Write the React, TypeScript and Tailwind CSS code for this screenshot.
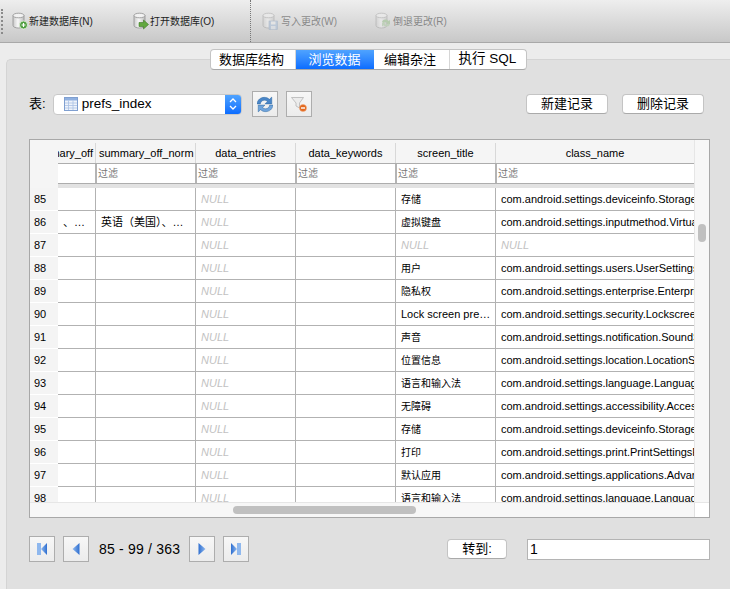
import React from "react"

const rows = [
    { n: 85, title: "存储", cls: "com.android.settings.deviceinfo.StorageSettings" },
    { n: 86, a: "、…", b: "英语（美国）、…", title: "虚拟键盘", cls: "com.android.settings.inputmethod.VirtualKeyboardFragment" },
    { n: 87, title: null, cls: null },
    { n: 88, title: "用户", cls: "com.android.settings.users.UserSettings" },
    { n: 89, title: "隐私权", cls: "com.android.settings.enterprise.EnterprisePrivacySettings" },
    { n: 90, title: "Lock screen pre…", latin: true, cls: "com.android.settings.security.LockscreenDashboardFragment" },
    { n: 91, title: "声音", cls: "com.android.settings.notification.SoundSettings" },
    { n: 92, title: "位置信息", cls: "com.android.settings.location.LocationSettings" },
    { n: 93, title: "语言和输入法", cls: "com.android.settings.language.LanguageAndInputSettings" },
    { n: 94, title: "无障碍", cls: "com.android.settings.accessibility.AccessibilitySettings" },
    { n: 95, title: "存储", cls: "com.android.settings.deviceinfo.StorageSettings" },
    { n: 96, title: "打印", cls: "com.android.settings.print.PrintSettingsFragment" },
    { n: 97, title: "默认应用", cls: "com.android.settings.applications.AdvancedAppSettings" },
    { n: 98, title: "语言和输入法", cls: "com.android.settings.language.LanguageAndInputSettings" }
]

const Db = ({ children }: { children?: React.ReactNode }) => (
    <svg width="16" height="18" viewBox="0 0 16 18" className="shrink-0">
        <defs>
            <linearGradient id="dbg" x1="0" x2="1" y1="0" y2="0">
                <stop offset="0" stopColor="#c9c9c9" />
                <stop offset="0.45" stopColor="#f8f8f8" />
                <stop offset="1" stopColor="#bdbdbd" />
            </linearGradient>
        </defs>
        <path d="M1 3.5v10c0 1.5 2.6 2.5 5.5 2.5s5.5-1 5.5-2.5v-10z" fill="url(#dbg)" stroke="#8f8f8f" strokeWidth="0.8" />
        <ellipse cx="6.5" cy="3.5" rx="5.5" ry="2.3" fill="#f2f2f2" stroke="#8f8f8f" strokeWidth="0.8" />
        {children}
    </svg>
)

const DbNew = () => (
    <Db>
        <circle cx="11.5" cy="13" r="4" fill="#4f9e3f" stroke="#e8f5e0" strokeWidth="0.8" />
        <path d="M11.5 11v4M9.5 13h4" stroke="#fff" strokeWidth="1.2" />
    </Db>
)

const DbOpen = () => (
    <Db>
        <path d="M6 10.5h4.5V8l5 4.5-5 4.5v-2.5H6z" fill="#62a83f" stroke="#3d7a25" strokeWidth="0.6" />
    </Db>
)

const DbSave = () => (
    <Db>
        <rect x="7" y="9" width="8.5" height="8.5" fill="#9db7d8" stroke="#7f98b8" strokeWidth="0.6" />
        <rect x="9" y="9.5" width="4.5" height="3" fill="#f2f2f2" />
        <rect x="9" y="14" width="4.5" height="3.2" fill="#dfe6ef" />
    </Db>
)

const DbRevert = () => (
    <Db>
        <path d="M7 9.5a4 4 0 0 1 6.5-.5l1.5-1v4h-4l1.3-1a2.4 2.4 0 0 0-3.8.3z" fill="#8cba7c" />
        <path d="M15 12.5a4 4 0 0 1-6.5.7L7 14.5v-4h4l-1.3 1.2a2.4 2.4 0 0 0 3.8-.2z" fill="#a5c99a" />
    </Db>
)

const TableIcon = () => (
    <svg width="14" height="14" viewBox="0 0 14 14" className="shrink-0">
        <rect x="0.5" y="0.5" width="13" height="13" fill="#eef3fb" stroke="#7f9fd0" />
        <rect x="1" y="1" width="12" height="2.5" fill="#8fb0e0" />
        <path d="M1 6h12M1 8.5h12M1 11h12M4.5 3.5V13M9 3.5V13" stroke="#a9c0e4" strokeWidth="0.8" />
    </svg>
)

const RefreshIcon = () => (
    <svg width="16" height="17" viewBox="1.5 2.5 13 13">
        <path d="M1.5 8.5C2 5 4.5 3.2 7.5 3.2c1.7 0 3 .6 4.1 1.6L13.5 3v5.5H8l2-2C9.3 5.8 8.5 5.500 7.500 5.500c-1.700 0-3 1.200-3.300 3z" fill="#4a86c8" stroke="#2d659f" strokeWidth="0.4" />
        <path d="M14.500 9.500c-.5 3.500-3 5.300-6 5.300-1.700 0-3-.6-4.100-1.600L2.500 15V9.500H8l-2 2c.7.700 1.500 1 2.500 1 1.700 0 3-1.200 3.300-3z" fill="#6fa4dc" stroke="#2d659f" strokeWidth="0.4" />
    </svg>
)

const FilterClearIcon = () => (
    <svg width="16" height="16" viewBox="0 0 16 16">
        <path d="M0.500 1.500h12L8.500 7v5L5 10V7z" fill="#ececec" stroke="#b5b5b5" strokeWidth="0.8" />
        <circle cx="12" cy="12" r="3.500" fill="#e2681f" stroke="#f3a878" strokeWidth="0.5" />
        <rect x="10" y="11.300" width="4" height="1.400" fill="#fff" />
    </svg>
)

const NavIcon = ({ dir, bar }: { dir: "l" | "r"; bar?: boolean }) => (
    <svg width="14" height="14" viewBox="0 0 14 14">
        <defs>
            <linearGradient id="navg" x1="0" x2="1" y1="0" y2="0">
                <stop offset="0" stopColor="#8fb8ee" />
                <stop offset="1" stopColor="#2f6fd0" />
            </linearGradient>
        </defs>
        <g transform={dir === "r" ? "translate(14 0) scale(-1 1)" : undefined}>
            {bar ? (
                <>
                    <rect x="2" y="1" width="4" height="12" fill="#8fb8ee" />
                    <path d="M12 1v12L6 7z" fill="url(#navg)" />
                </>
            ) : (
                <path d="M10.500 1v12L3.500 7z" fill="url(#navg)" />
            )}
        </g>
    </svg>
)

const ToolItem = ({ w, icon, label, off }: { w: string; icon: React.ReactNode; label: string; off?: boolean }) => (
    <div className={`flex items-center ${w} ${off ? "opacity-45" : ""}`}>
        {icon}
        <span className="text-[10px] text-[#222]">{label}</span>
    </div>
)

const IconButton = ({ children }: { children: React.ReactNode }) => (
    <div className="flex h-[26px] w-[26px] shrink-0 items-center justify-center border border-[#adadad] bg-gradient-to-b from-[#f7f7f7] to-[#ececec]">
        {children}
    </div>
)

const MacButton = ({ w, children }: { w: string; children: React.ReactNode }) => (
    <div className={`flex h-[20px] ${w} shrink-0 items-center justify-center rounded-[4px] border border-[#c4c4c4] border-b-[#aaa] bg-white text-[13px] text-black`}>
        {children}
    </div>
)

const Tab = ({ label, active, w }: { label: string; active?: boolean; w: string }) => (
    <div
        className={`flex h-full ${w} items-center justify-center text-[13px] ${
            active ? "bg-gradient-to-b from-[#4fa3ff] to-[#0a6cff] text-white" : "border-r border-[#d6d6d6] text-black"
        }`}
    >
        {label}
    </div>
)

const Null = () => <span className="text-[11px] italic text-[#c2c2c2]">NULL</span>

const Head = ({ w, children }: { w: string; children: React.ReactNode }) => (
    <div className={`flex ${w} shrink-0 items-center justify-center overflow-hidden whitespace-nowrap border-r border-[#d8d8d8] text-[11px] text-black`}>
        {children}
    </div>
)

const Filter = ({ w }: { w: string }) => (
    <div className={`flex ${w} shrink-0 items-center border-l-2 border-[#b4b4b4] pl-[1px] text-[10px] text-[#777]`}>过滤</div>
)

const Cell = ({ w, children }: { w: string; children?: React.ReactNode }) => (
    <div className={`flex ${w} shrink-0 items-center overflow-hidden whitespace-nowrap border-r border-b border-[#b2b2b2] pl-[5px] text-[11px] text-black`}>
        {children}
    </div>
)

const App = () => (
    <div className="flex h-[589px] w-[730px] flex-col overflow-hidden bg-[#ececec] font-['Liberation_Sans','Noto_Sans_CJK_SC',sans-serif]">
        <div className="flex h-[43px] shrink-0 items-center border-b border-[#a9a9a9] bg-gradient-to-b from-[#eeeeee] to-[#c8c8c8]">
            <div className="ml-[1px] mr-[9px] h-[25px] w-[2px] border-l-2 border-dotted border-[#8a8a8a]" />
            <ToolItem w="w-[121px] gap-[1px]" icon={<DbNew />} label="新建数据库(N)" />
            <ToolItem w="w-[117px] gap-[1px]" icon={<DbOpen />} label="打开数据库(O)" />
            <div className="mr-[11px] h-full w-[1px] border-l border-dotted border-[#777]" />
            <ToolItem w="w-[113px] gap-[3px]" icon={<DbSave />} label="写入更改(W)" off />
            <ToolItem w="w-[100px] gap-[2px]" icon={<DbRevert />} label="倒退更改(R)" off />
        </div>

        <div className="flex min-h-0 flex-1 flex-col pl-[6px] pt-[6px]">
            <div className="z-10 -mb-[11px] flex h-[21px] shrink-0 justify-center">
                <div className="flex w-[317px] overflow-hidden rounded-[4px] border border-[#c4c4c4] border-b-[#a8a8a8] bg-white">
                    <Tab w="w-[85px] pr-[2px]" label="数据库结构" />
                    <Tab w="w-[78px]" label="浏览数据" active />
                    <Tab w="w-[76px] pr-[2px]" label="编辑杂注" />
                    <div className="flex h-full flex-1 items-center justify-center text-[13.5px] text-black">执行 SQL</div>
                </div>
            </div>

            <div className="flex min-h-0 flex-1 flex-col rounded-tl-[5px] border-l border-t border-[#d4d4d4] bg-[#e0e0e0] pl-[22px] pr-[20px]">
                <div className="mt-[31px] flex h-[26px] items-center">
                    <span className="mr-[7px] text-[13px] text-black">表:</span>
                    <div className="flex h-[21px] w-[189px] shrink-0 items-center overflow-hidden rounded-[4px] border border-[#c8c8c8] bg-white">
                        <div className="ml-[10px] mr-[4px]">
                            <TableIcon />
                        </div>
                        <span className="flex-1 text-[13.5px] text-black">prefs_index</span>
                        <div className="flex h-full w-[16px] items-center justify-center bg-gradient-to-b from-[#4fa3ff] to-[#0a6cff]">
                            <svg width="8" height="14" viewBox="0 0 8 14" fill="none" stroke="#fff" strokeWidth="1.300">
                                <path d="M1 5l3-3 3 3M1 9l3 3 3-3" />
                            </svg>
                        </div>
                    </div>
                    <div className="ml-[10px] mr-[8px]">
                        <IconButton>
                            <RefreshIcon />
                        </IconButton>
                    </div>
                    <IconButton>
                        <FilterClearIcon />
                    </IconButton>
                    <div className="flex-1" />
                    <MacButton w="w-[82px]">新建记录</MacButton>
                    <div className="ml-[14px] mr-[6px]">
                        <MacButton w="w-[82px]">删除记录</MacButton>
                    </div>
                </div>

                <div className="mt-[22px] flex h-[379px] shrink-0 flex-col border border-[#a8a8a8] bg-[#f6f6f6]">
                    <div className="flex min-h-0 flex-1">
                        <div className="flex min-w-0 flex-1 flex-col">
                            <div className="flex h-[23px] shrink-0 bg-[#f5f5f5] pt-[3px]">
                                <div className="w-[28px] shrink-0" />
                                <div className="flex w-[38px] shrink-0 items-center justify-end overflow-hidden whitespace-nowrap border-r border-[#d8d8d8] pr-[2px] text-[11px] text-black">
                                    <span className="shrink-0">summary_off</span>
                                </div>
                                <Head w="w-[100px]">
                                    <span className="w-full pl-[3px]">summary_off_norm</span>
                                </Head>
                                <Head w="w-[100px]">data_entries</Head>
                                <Head w="w-[100px]">data_keywords</Head>
                                <Head w="w-[100px]">screen_title</Head>
                                <Head w="w-[199px]">class_name</Head>
                            </div>
                            <div className="flex h-[21px] shrink-0 bg-[#f5f5f5]">
                                <div className="w-[28px] shrink-0" />
                                <div className="flex flex-1 border-y border-[#adadad] bg-white">
                                    <div className="w-[37px] shrink-0" />
                                    <Filter w="w-[100px]" />
                                    <Filter w="w-[100px]" />
                                    <Filter w="w-[100px]" />
                                    <Filter w="w-[100px]" />
                                    <Filter w="flex-1" />
                                </div>
                            </div>
                            <div className="flex h-[4px] shrink-0 bg-[#e2e2e2]">
                                <div className="w-[28px] shrink-0 bg-[#f5f5f5]" />
                            </div>
                            <div className="min-h-0 flex-1 overflow-hidden bg-white">
                                {rows.map((row) => (
                                    <div key={row.n} className="flex h-[23px]">
                                        <div className="flex w-[28px] shrink-0 items-center border-b border-white bg-[#f4f4f4] pl-[4px] text-[11px] text-black">
                                            {row.n}
                                        </div>
                                        <Cell w="w-[38px]">{row.a}</Cell>
                                        <Cell w="w-[100px]">{row.b}</Cell>
                                        <Cell w="w-[100px]">
                                            <Null />
                                        </Cell>
                                        <Cell w="w-[100px]" />
                                        <Cell w="w-[100px]">
                                            {row.title === null ? (
                                                <Null />
                                            ) : (
                                                <span className={row.latin ? "" : "text-[10px]"}>{row.title}</span>
                                            )}
                                        </Cell>
                                        <Cell w="w-[199px]">{row.cls ?? <Null />}</Cell>
                                    </div>
                                ))}
                            </div>
                        </div>
                        <div className="w-[15px] shrink-0 border-l border-[#e6e6e6] bg-[#f7f7f7] pl-[3px] pt-[84px]">
                            <div className="h-[18px] w-[8px] rounded-full bg-[#c0c0c0]" />
                        </div>
                    </div>
                    <div className="flex h-[15px] shrink-0 border-t border-[#e6e6e6] bg-[#f7f7f7]">
                        <div className="min-w-0 flex-1 pl-[203px] pt-[3px]">
                            <div className="h-[8px] w-[183px] rounded-full bg-[#c0c0c0]" />
                        </div>
                        <div className="w-[15px] shrink-0 border-l border-[#e0e0e0] bg-white" />
                    </div>
                </div>

                <div className="mt-[18px] flex h-[26px] items-center">
                    <IconButton>
                        <NavIcon dir="l" bar />
                    </IconButton>
                    <div className="ml-[8px]">
                        <IconButton>
                            <NavIcon dir="l" />
                        </IconButton>
                    </div>
                    <span className="w-[100px] shrink-0 whitespace-nowrap pl-[10px] text-[14px] tracking-[0.2px] text-black">85 - 99 / 363</span>
                    <IconButton>
                        <NavIcon dir="r" />
                    </IconButton>
                    <div className="ml-[8px]">
                        <IconButton>
                            <NavIcon dir="r" bar />
                        </IconButton>
                    </div>
                    <div className="flex-1" />
                    <MacButton w="w-[60px]">转到:</MacButton>
                    <div className="ml-[20px] flex h-[21px] w-[183px] shrink-0 items-center border border-[#b4b4b4] bg-white pl-[2px] text-[14px] text-black">
                        1
                    </div>
                </div>
            </div>
        </div>
    </div>
)

export default App
